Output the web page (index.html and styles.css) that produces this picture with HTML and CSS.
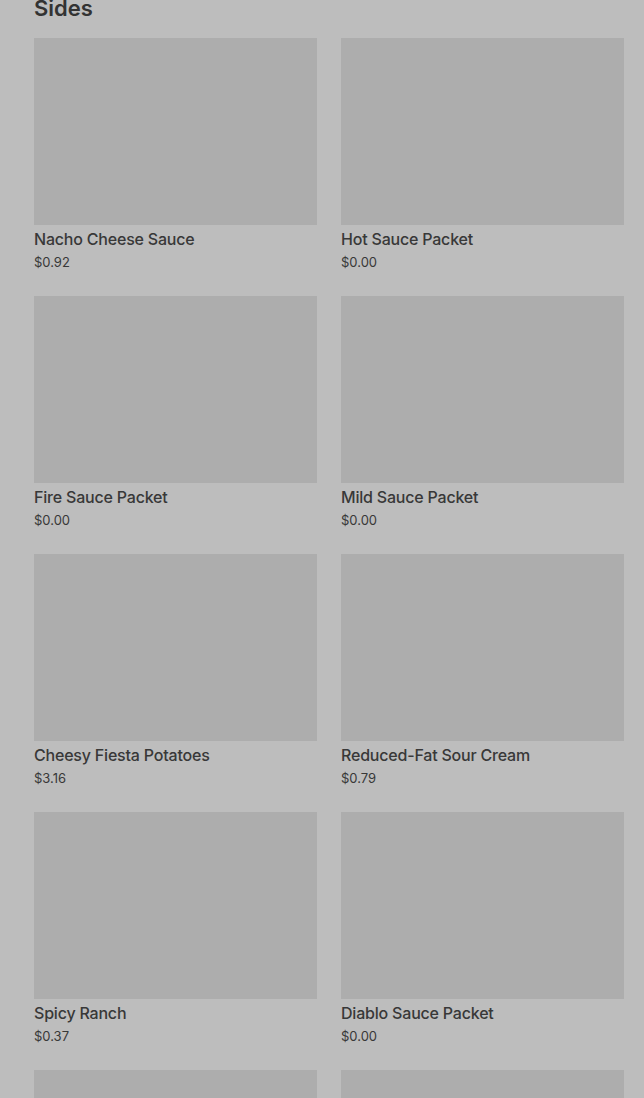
FILE: index.html
```html
<!DOCTYPE html>
<html lang="en">
<head>
    <meta charset="UTF-8">
    <meta name="viewport" content="width=device-width, initial-scale=1.0">
    <title>Sides</title>
    <link rel="stylesheet" href="styles.css">
</head>
<body>
    <div class="menu">
        <h2 class="section-title">Sides</h2>
        <div class="grid">
            <div class="item">
                <div class="item-image"></div>
                <div class="item-name">Nacho Cheese Sauce</div>
                <div class="item-price">$0.92</div>
            </div>
            <div class="item">
                <div class="item-image"></div>
                <div class="item-name">Hot Sauce Packet</div>
                <div class="item-price">$0.00</div>
            </div>
            <div class="item">
                <div class="item-image"></div>
                <div class="item-name">Fire Sauce Packet</div>
                <div class="item-price">$0.00</div>
            </div>
            <div class="item">
                <div class="item-image"></div>
                <div class="item-name">Mild Sauce Packet</div>
                <div class="item-price">$0.00</div>
            </div>
            <div class="item">
                <div class="item-image"></div>
                <div class="item-name">Cheesy Fiesta Potatoes</div>
                <div class="item-price">$3.16</div>
            </div>
            <div class="item">
                <div class="item-image"></div>
                <div class="item-name">Reduced-Fat Sour Cream</div>
                <div class="item-price">$0.79</div>
            </div>
            <div class="item">
                <div class="item-image"></div>
                <div class="item-name">Spicy Ranch</div>
                <div class="item-price">$0.37</div>
            </div>
            <div class="item">
                <div class="item-image"></div>
                <div class="item-name">Diablo Sauce Packet</div>
                <div class="item-price">$0.00</div>
            </div>
            <div class="item">
                <div class="item-image"></div>
            </div>
            <div class="item">
                <div class="item-image"></div>
            </div>
        </div>
    </div>
</body>
</html>
```

FILE: styles.css
```css
body {
    margin: 0;
    background-color: #bdbdbd;
    font-family: Inter, 'Noto Sans', sans-serif;
    color: #383838;
    overflow: hidden;
    height: 1098px;
}
.menu {
    padding: 0 20px 0 34px;
}
.section-title {
    margin: -6px 0 16px;
    font-size: 22px;
    line-height: 28px;
    font-weight: 600;
    color: #333333;
}
.grid {
    display: grid;
    grid-template-columns: 1fr 1fr;
    column-gap: 24px;
    row-gap: 25px;
}
.item-image {
    height: 187px;
    background-color: #adadad;
}
.item-name {
    margin-top: 4px;
    font-size: 16px;
    line-height: 20px;
    font-weight: 500;
    letter-spacing: -0.2px;
}
.item-price {
    margin-top: 4px;
    font-size: 13px;
    line-height: 18px;
}
```
